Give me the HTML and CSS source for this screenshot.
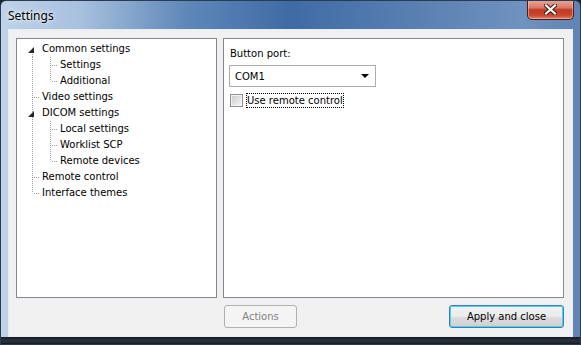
FILE: index.html
```html
<!DOCTYPE html>
<html>
<head>
    <title>Settings</title>
    <link rel="stylesheet" href="styles.css">
</head>
<body>
    <div class="window">
        <div class="titlebar">
            <div class="title">Settings</div>
            <div class="close-btn">
                <svg width="13" height="11" viewBox="0 0 13 11">
                    <path d="M2 1.5 L11 9.5 M11 1.5 L2 9.5" stroke="#3a1a14" stroke-width="4" stroke-linecap="square"/>
                    <path d="M2 1.5 L11 9.5 M11 1.5 L2 9.5" stroke="#ffffff" stroke-width="2.2" stroke-linecap="square"/>
                </svg>
            </div>
        </div>

        <div class="client">
            <div class="tree">
                <div class="row"><span class="cell first"><i class="expander"></i></span><span class="label">Common settings</span></div>
                <div class="row"><span class="cell pipe"></span><span class="cell branch"></span><span class="label">Settings</span></div>
                <div class="row"><span class="cell pipe"></span><span class="cell branch last"></span><span class="label">Additional</span></div>
                <div class="row"><span class="cell branch"></span><span class="label">Video settings</span></div>
                <div class="row"><span class="cell pipe"><i class="expander"></i></span><span class="label">DICOM settings</span></div>
                <div class="row"><span class="cell pipe"></span><span class="cell branch"></span><span class="label">Local settings</span></div>
                <div class="row"><span class="cell pipe"></span><span class="cell branch"></span><span class="label">Worklist SCP</span></div>
                <div class="row"><span class="cell pipe"></span><span class="cell branch last"></span><span class="label">Remote devices</span></div>
                <div class="row"><span class="cell branch"></span><span class="label">Remote control</span></div>
                <div class="row"><span class="cell branch last"></span><span class="label">Interface themes</span></div>
            </div>

            <div class="page">
                <div class="field-label">Button port:</div>
                <div class="combo">
                    <span>COM1</span>
                    <i class="combo-arrow"></i>
                </div>
                <div class="check-row">
                    <span class="checkbox"></span>
                    <span class="check-label">Use remote control</span>
                </div>
            </div>

            <div class="buttons">
                <div class="btn disabled">Actions</div>
                <div class="btn default">Apply and close</div>
            </div>
        </div>
    </div>
</body>
</html>
```

FILE: styles.css
```css
body {
    margin: 0;
    padding: 0;
    font-family: "DejaVu Sans", Tahoma, sans-serif;
    font-size: 10px;
    background-color: #1c2027;
}
.window {
    width: 581px;
    height: 345px;
    box-sizing: border-box;
    border: 1px solid #2a3b52;
    border-radius: 6px 6px 0 0;
    background:
        linear-gradient(to bottom, transparent 336px, #161a20 336px, #2c3340 340px, #0f1216 344px),
        linear-gradient(to right, #bfd2e8 0%, #a6c0de 14%, #5f87b8 32%, #3f6ba5 50%, #5a80b2 72%, #6f92bf 90%, #5f83b3 100%);
    display: flex;
    flex-direction: column;
    overflow: hidden;
}
.titlebar {
    height: 28px;
    display: flex;
    align-items: flex-start;
    flex: none;
}
.title {
    font-family: "Noto Sans", "Open Sans", sans-serif;
    font-size: 12px;
    color: #000;
    padding: 6px 0 0 7px;
    text-shadow: 0 0 6px rgba(255,255,255,0.9), 0 0 3px rgba(255,255,255,0.8);
}
.close-btn {
    margin-left: auto;
    margin-right: 6px;
    margin-top: -1px;
    width: 45px;
    height: 19px;
    border: 1px solid #4a1c16;
    border-top: none;
    border-radius: 0 0 5px 5px;
    background: linear-gradient(to bottom, #e9a899 0%, #d97a66 40%, #c13b25 52%, #c9452d 80%, #e0826a 100%);
    box-shadow: inset 0 0 0 1px rgba(255,220,210,0.45);
    display: flex;
    align-items: center;
    justify-content: center;
}
.client {
    flex: none;
    margin: 0 7px 0 7px;
    height: 308px;
    box-sizing: border-box;
    border: 1px solid #e6edf5;
    background-color: #f0f0f0;
    padding: 8px 8px 0 7px;
    display: grid;
    grid-template-columns: 201px 341px;
    grid-template-rows: 260px 23px;
    column-gap: 6px;
    row-gap: 7px;
}
.tree {
    background-color: #fff;
    border: 1px solid #828790;
    box-sizing: border-box;
    padding: 2px 0 0 6px;
}
.row {
    display: flex;
    height: 16px;
    align-items: stretch;
}
.cell {
    width: 18px;
    flex: none;
    position: relative;
}
.cell.pipe::before,
.cell.branch::before,
.cell.first::before {
    content: "";
    position: absolute;
    left: 9px;
    top: 0;
    bottom: 0;
    width: 1px;
    background: repeating-linear-gradient(to bottom, #a0a0a0 0 1px, transparent 1px 2px);
}
.cell.first::before {
    top: 13px;
}
.cell.last::before {
    bottom: 8px;
}
.cell.branch::after {
    content: "";
    position: absolute;
    left: 10px;
    top: 8px;
    width: 7px;
    height: 1px;
    background: repeating-linear-gradient(to right, transparent 0 1px, #a0a0a0 1px 2px);
}
.expander {
    position: absolute;
    left: 5px;
    top: 6px;
    width: 0;
    height: 0;
    border-right: 6px solid #262626;
    border-top: 6px solid transparent;
    z-index: 1;
}
.label {
    line-height: 16px;
    padding: 0 1px;
    color: #000;
    white-space: nowrap;
}
.page {
    background-color: #fff;
    border: 1px solid #828790;
    box-sizing: border-box;
    padding: 8px 0 0 5px;
}
.field-label {
    line-height: 14px;
    padding-left: 1px;
}
.combo {
    margin-top: 4px;
    width: 147px;
    height: 22px;
    box-sizing: border-box;
    border: 1px solid #acacac;
    background-color: #fff;
    display: flex;
    align-items: center;
    padding: 0 6px 0 5px;
}
.combo-arrow {
    margin-left: auto;
    width: 0;
    height: 0;
    border-left: 4px solid transparent;
    border-right: 4px solid transparent;
    border-top: 4px solid #000;
}
.check-row {
    margin-top: 5px;
    display: flex;
    align-items: center;
    height: 16px;
    padding-left: 1px;
}
.checkbox {
    width: 13px;
    height: 13px;
    box-sizing: border-box;
    border: 1px solid #8e8f8f;
    background: linear-gradient(135deg, #cbcbcb, #f6f6f6);
    box-shadow: inset 0 0 0 1px #f4f4f4;
}
.check-label {
    margin-left: 3px;
    padding: 1px 1px;
    line-height: 13px;
    outline: 1px dotted #000;
    outline-offset: -1px;
}
.buttons {
    grid-column: 2;
    display: flex;
    justify-content: space-between;
    padding-left: 1px;
}
.btn {
    height: 23px;
    box-sizing: border-box;
    border-radius: 3px;
    display: flex;
    align-items: center;
    justify-content: center;
}
.btn.disabled {
    width: 73px;
    border: 1px solid #adb2b5;
    background-color: #f4f4f4;
    color: #838383;
}
.btn.default {
    width: 115px;
    border: 1px solid #3c7fb1;
    background: linear-gradient(to bottom, #f2f2f2 0%, #ebebeb 50%, #dddddd 51%, #cfcfcf 100%);
    box-shadow: inset 0 0 0 1px #48d2f9;
    color: #000;
}
```
